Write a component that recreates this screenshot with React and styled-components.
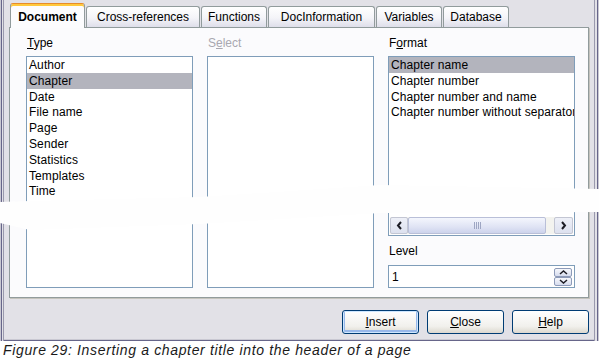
import React from 'react';
import styled, { createGlobalStyle } from 'styled-components';

const GlobalStyle = createGlobalStyle`
  body {
    margin: 0;
    background: #ffffff;
    font-family: "Liberation Sans", Arial, sans-serif;
  }
`;

const Page = styled.div`
  position: relative;
  width: 599px;
  height: 359px;
  overflow: hidden;
`;

const Dialog = styled.div`
  box-sizing: border-box;
  width: 599px;
  height: 341px;
  padding: 3px 10px 0 9px;
  background: #e2e1e7;
  box-shadow:
    inset 1px 0 0 #c9c8d2,
    inset 2px 0 0 #67668a,
    inset 3px 0 0 #e2e1e7,
    inset 4px 0 0 #9a99ad,
    inset -1px 0 0 #c9c8d2,
    inset -2px 0 0 #67668a,
    inset -4px 0 0 #e2e1e7,
    inset -5px 0 0 #9a99ad,
    inset 0 -1px 0 #67668a,
    inset 0 -2px 0 #c9c8d2;
`;

const TabBar = styled.div`
  display: flex;
  align-items: flex-end;
  gap: 1px;
  height: 24px;
  margin-left: 1px;
`;

const Tab = styled.div`
  position: relative;
  z-index: ${(p) => (p.$active ? 2 : 1)};
  box-sizing: border-box;
  width: ${(p) => p.$w}px;
  height: ${(p) => (p.$active ? 25 : 21)}px;
  margin-bottom: ${(p) => (p.$active ? -1 : 0)}px;
  display: flex;
  align-items: center;
  justify-content: center;
  border: 1px solid #919b9c;
  border-bottom: none;
  border-top-color: ${(p) => (p.$active ? '#e68b2c' : '#919b9c')};
  border-radius: 3px 3px 0 0;
  background: ${(p) =>
    p.$active
      ? '#fcfcfe'
      : 'linear-gradient(#ffffff, #f4f4f8 55%, #dedeea)'};
  box-shadow: ${(p) => (p.$active ? 'inset 0 2px 0 #ffc83c' : 'none')};
  font-size: 12px;
  font-weight: ${(p) => (p.$active ? 700 : 400)};
  color: #000;
  padding-top: ${(p) => (p.$active ? 2 : 0)}px;
`;

const Panel = styled.div`
  box-sizing: border-box;
  width: 580px;
  height: 271px;
  padding: 8px 0 0 16px;
  background: #fbfbfd;
  border: 1px solid #919b9c;
  box-shadow: 1px 1px 0 #c4c3bd;
  display: grid;
  grid-template-columns: 167px 167px 187px;
  column-gap: 14px;
  align-items: start;
`;

const Column = styled.div`
  display: flex;
  flex-direction: column;
`;

const Label = styled.div`
  height: 14px;
  line-height: 14px;
  font-size: 12px;
  color: ${(p) => (p.$disabled ? '#a9a8b0' : '#000')};
  margin-top: ${(p) => p.$mt || 0}px;
  margin-bottom: ${(p) => p.$mb || 6}px;
  padding-left: 1px;
`;

const Key = styled.span`
  text-decoration: underline;
`;

const ListBox = styled.div`
  box-sizing: border-box;
  height: ${(p) => p.$h}px;
  border: 1px solid #7f9db9;
  background: #ffffff;
  display: flex;
  flex-direction: column;
  overflow: hidden;
`;

const Items = styled.div`
  flex: 1;
  overflow: hidden;
`;

const Item = styled.div`
  height: 15.8px;
  line-height: 17px;
  padding-left: 2px;
  font-size: 12px;
  letter-spacing: 0.1px;
  white-space: nowrap;
  overflow: hidden;
  color: #000;
  background: ${(p) => (p.$selected ? '#b3b4bd' : 'transparent')};
`;

const ScrollBar = styled.div`
  display: flex;
  height: 17px;
  margin: 0 1px 1px 1px;
  background: #f3f3ef;
`;

const ArrowButton = styled.div`
  box-sizing: border-box;
  width: ${(p) => p.$w}px;
  height: 17px;
  display: flex;
  align-items: center;
  justify-content: center;
  border: 1px solid #c3c6d3;
  border-radius: 2px;
  background: linear-gradient(#eef0f8, #dde1ef);
`;

const Thumb = styled.div`
  box-sizing: border-box;
  flex: 1;
  height: 17px;
  display: flex;
  align-items: center;
  justify-content: center;
  border: 1px solid #b9bfd8;
  border-radius: 2px;
  background: linear-gradient(#f4f6fd, #dfe3f4 60%, #cdd3ec);
  margin-right: 8px;
`;

const Grip = styled.div`
  display: flex;
  gap: 1px;
`;

const GripLine = styled.div`
  width: 1px;
  height: 7px;
  background: #9ea6c3;
`;

const SpinField = styled.div`
  box-sizing: border-box;
  height: 23px;
  border: 1px solid #7f9db9;
  background: #ffffff;
  display: flex;
  align-items: center;
  justify-content: space-between;
  padding: 0 2px 0 3px;
  font-size: 12px;
`;

const SpinButtons = styled.div`
  display: flex;
  flex-direction: column;
`;

const SpinButton = styled.div`
  box-sizing: border-box;
  width: 18px;
  height: 9px;
  display: flex;
  align-items: center;
  justify-content: center;
  border: 1px solid #8d9ab8;
  border-radius: 2px;
  background: linear-gradient(#f7f8fc, #d6dcee);
`;

const ButtonRow = styled.div`
  display: flex;
  justify-content: flex-end;
  gap: 8px;
  margin-top: 12px;
`;

const Button = styled.div`
  box-sizing: border-box;
  width: 77px;
  height: 24px;
  display: flex;
  align-items: center;
  justify-content: center;
  border: 1px solid #003c74;
  border-radius: 3px;
  background: linear-gradient(#ffffff, #f1f0ec 70%, #dcd8cf);
  box-shadow: ${(p) =>
    p.$focused ? 'inset 0 0 0 1px #cee7ff, inset 0 -1px 0 2px #98b8ea' : 'none'};
  font-size: 12px;
  color: #000;
`;

const Caption = styled.div`
  padding: 1px 0 0 3px;
  font-size: 14px;
  font-style: italic;
  letter-spacing: 0.65px;
  color: #1a1a1a;
  line-height: 17px;
`;

const Smear = styled.div`
  position: absolute;
  left: 0;
  top: 180px;
  width: 599px;
  height: 60px;
  background: #fefefe;
  clip-path: polygon(0 22px, 30px 21px, 200px 17px, 380px 5px, 599px 9px, 599px 32px, 380px 33px, 200px 44px, 30px 50px, 0 43px);
`;

const Chevron = ({ dir }) => {
  const pts = {
    left: '6,2 3,5.5 6,9',
    right: '3,2 6,5.5 3,9',
    up: '1,5 4.5,2 8,5',
    down: '1,2 4.5,5 8,2',
  }[dir];
  const small = dir === 'up' || dir === 'down';
  return (
    <svg width={9} height={small ? 7 : 11} viewBox={small ? '0 0 9 7' : '0 0 9 11'}>
      <polyline points={pts} fill="none" stroke="#1c1c24" strokeWidth={small ? 1.5 : 2} />
    </svg>
  );
};

const tabs = [
  { label: 'Document', w: 75, active: true },
  { label: 'Cross-references', w: 114 },
  { label: 'Functions', w: 66 },
  { label: 'DocInformation', w: 107 },
  { label: 'Variables', w: 66 },
  { label: 'Database', w: 66 },
];

const types = ['Author', 'Chapter', 'Date', 'File name', 'Page', 'Sender', 'Statistics', 'Templates', 'Time'];
const formats = ['Chapter name', 'Chapter number', 'Chapter number and name', 'Chapter number without separator'];

const App = () => (
  <Page>
    <GlobalStyle />
    <Dialog>
      <TabBar>
        {tabs.map((t) => (
          <Tab key={t.label} $w={t.w} $active={t.active}>
            {t.label}
          </Tab>
        ))}
      </TabBar>
      <Panel>
        <Column>
          <Label><Key>T</Key>ype</Label>
          <ListBox $h={232}>
            <Items>
              {types.map((t) => (
                <Item key={t} $selected={t === 'Chapter'}>{t}</Item>
              ))}
            </Items>
          </ListBox>
        </Column>
        <Column>
          <Label $disabled>S<Key>e</Key>lect</Label>
          <ListBox $h={232} />
        </Column>
        <Column>
          <Label>F<Key>o</Key>rmat</Label>
          <ListBox $h={180}>
            <Items>
              {formats.map((f) => (
                <Item key={f} $selected={f === 'Chapter name'}>{f}</Item>
              ))}
            </Items>
            <ScrollBar>
              <ArrowButton $w={18}><Chevron dir="left" /></ArrowButton>
              <Thumb>
                <Grip>
                  <GripLine /><GripLine /><GripLine /><GripLine />
                </Grip>
              </Thumb>
              <ArrowButton $w={19}><Chevron dir="right" /></ArrowButton>
            </ScrollBar>
          </ListBox>
          <Label $mt={8} $mb={7}>Level</Label>
          <SpinField>
            <span>1</span>
            <SpinButtons>
              <SpinButton><Chevron dir="up" /></SpinButton>
              <SpinButton><Chevron dir="down" /></SpinButton>
            </SpinButtons>
          </SpinField>
        </Column>
      </Panel>
      <ButtonRow>
        <Button $focused><span><Key>I</Key>nsert</span></Button>
        <Button><span><Key>C</Key>lose</span></Button>
        <Button><span><Key>H</Key>elp</span></Button>
      </ButtonRow>
    </Dialog>
    <Caption>Figure 29: Inserting a chapter title into the header of a page</Caption>
    <Smear />
  </Page>
);

export default App;
